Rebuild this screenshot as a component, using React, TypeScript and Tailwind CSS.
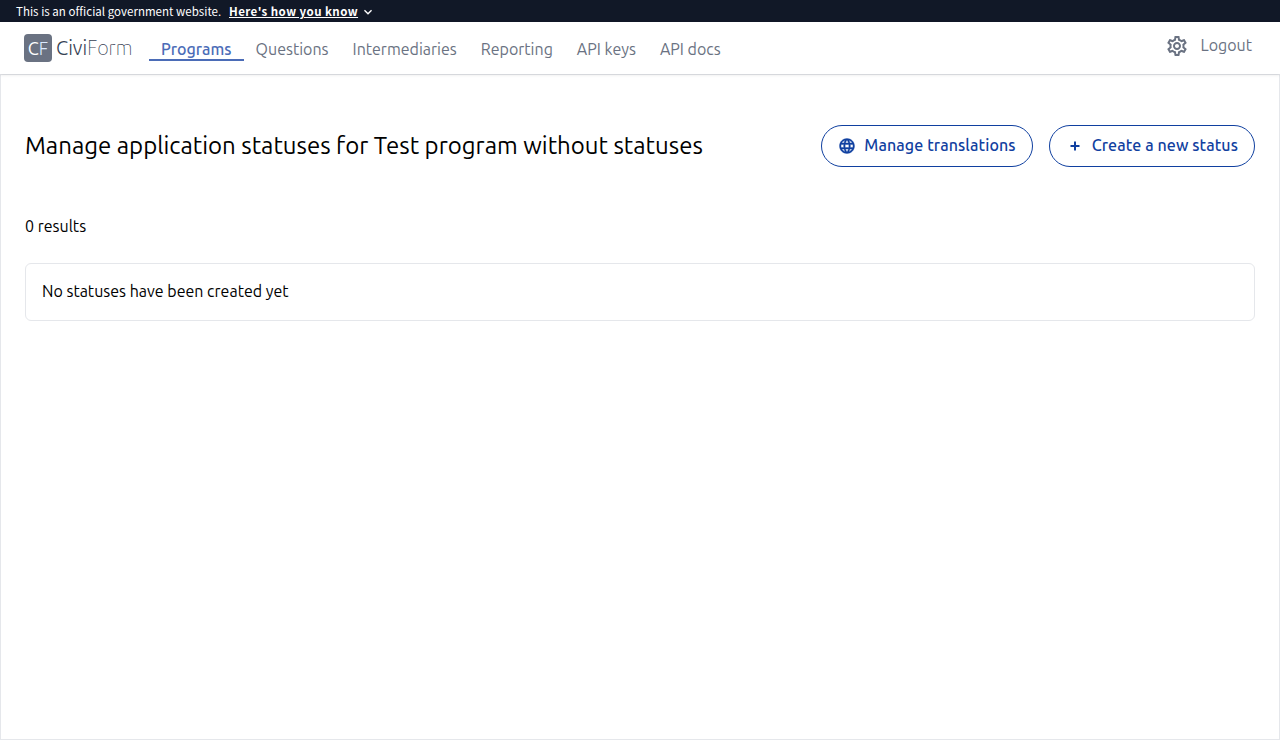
import { ReactNode } from 'react';

const links = ['Programs', 'Questions', 'Intermediaries', 'Reporting', 'API keys', 'API docs'];

function Banner() {
  return (
    <header className="flex h-[22px] items-center bg-[#111827] px-4 font-['Noto_Sans_CJK_JP',sans-serif] text-[11.5px] leading-[22px] text-white">
      <span className="w-[213px] whitespace-nowrap tracking-[0.03px]">This is an official government website.</span>
      <button className="flex items-center leading-[22px] font-bold">
        <span className="whitespace-nowrap tracking-[0.44px] underline">Here's how you know</span>
        <svg className="ml-0.5 mt-0.5 size-4" viewBox="0 0 24 24" fill="currentColor">
          <path d="M16.59 8.59 12 13.17 7.41 8.59 6 10l6 6 6-6z" />
        </svg>
      </button>
    </header>
  );
}

function Nav() {
  return (
    <nav className="relative flex h-[52px] items-start bg-white pl-6 pr-7 text-gray-500 shadow-[0_1px_3px_rgba(0,0,0,0.1)]">
      <a className="mt-3 flex items-center">
        <span className="flex size-7 items-center justify-center rounded bg-gray-500 text-lg font-normal leading-7 text-white">
          C<span className="font-light text-blue-100">F</span>
        </span>
        <span className="ml-1 w-[93px] text-xl font-light leading-7 text-gray-700">
          Civi<span className="font-thin">Form</span>
        </span>
      </a>
      <div className="mt-[15px] flex">
        {links.map((label, i) => (
          <a
            key={label}
            className={
              i === 0
                ? 'h-6 w-[94.6px] border-b-2 border-[#4b6cb7] px-3 font-medium leading-6 text-[#4b6cb7]'
                : 'h-6 px-3 leading-6'
            }
          >
            {label}
          </a>
        ))}
      </div>
      <div className="ml-auto mt-[11px] flex items-start">
        <svg className="mt-[1px] mr-3 size-6" viewBox="0 0 24 24" fill="currentColor">
          <path d="M19.43 12.98c.04-.32.07-.64.07-.98 0-.34-.03-.66-.07-.98l2.11-1.650c.19-.15.24-.42.12-.64l-2-3.460c-.09-.16-.26-.25-.44-.25-.06 0-.12.01-.17.03l-2.49 1c-.52-.4-1.080-.73-1.690-.98l-.38-2.650C14.460 2.180 14.250 2 14 2h-4c-.25 0-.46.18-.49.42l-.38 2.650c-.61.25-1.170.59-1.690.98l-2.490-1c-.06-.02-.12-.03-.18-.03-.17 0-.34.09-.43.25l-2 3.460c-.13.22-.07.49.12.64l2.110 1.650c-.04.32-.07.65-.07.98 0 .33.03.66.07.98l-2.110 1.650c-.19.15-.24.42-.12.64l2 3.460c.09.16.26.25.44.25.06 0 .12-.01.17-.03l2.490-1c.52.4 1.080.73 1.690.98l.38 2.650c.03.24.24.42.49.42h4c.25 0 .46-.18.49-.42l.38-2.650c.61-.25 1.170-.59 1.690-.98l2.490 1c.06.02.12.03.18.03.17 0 .34-.09.43-.25l2-3.460c.12-.22.07-.49-.12-.64l-2.110-1.650zm-1.980-1.710c.04.31.05.52.05.73 0 .21-.02.43-.05.73l-.14 1.130.89.7 1.080.84-.7 1.210-1.270-.51-1.040-.42-.9.68c-.43.32-.84.56-1.250.73l-1.060.43-.16 1.130-.2 1.350h-1.400l-.19-1.350-.16-1.130-1.060-.43c-.43-.18-.83-.41-1.230-.71l-.91-.7-1.060.43-1.270.51-.7-1.210 1.080-.84.89-.7-.14-1.130c-.03-.31-.05-.54-.05-.74s.02-.43.05-.73l.14-1.130-.89-.7-1.080-.84.7-1.210 1.270.51 1.040.42.9-.68c.43-.32.84-.56 1.250-.73l1.060-.43.16-1.130.2-1.350h1.390l.19 1.350.16 1.130 1.060.43c.43.18.83.41 1.230.71l.91.7 1.060-.43 1.270-.51.7 1.210-1.070.85-.89.7.14 1.130zM12 8c-2.210 0-4 1.790-4 4s1.790 4 4 4 4-1.790 4-4-1.790-4-4-4zm0 6c-1.100 0-2-.9-2-2s.9-2 2-2 2 .9 2 2-.9 2-2 2z" />
        </svg>
        <a className="leading-6">Logout</a>
      </div>
    </nav>
  );
}

function PillButton({ icon, children }: { icon: ReactNode; children: ReactNode }) {
  return (
    <button className="flex h-[42px] items-center rounded-full border border-[#1040a0] px-4 font-medium leading-6 tracking-[0.1px] text-[#1040a0]">
      {icon}
      <span className="pb-0.5">{children}</span>
    </button>
  );
}

export default function App() {
  return (
    <div className="flex h-[740px] flex-col bg-white font-['Ubuntu',sans-serif] text-base text-black">
      <Banner />
      <Nav />
      <main className="flex-1 border border-gray-200 px-6">
        <div className="mt-[50px] flex items-center">
          <h1 className="flex-1 text-2xl">Manage application statuses for Test program without statuses</h1>
          <div className="flex gap-4">
            <PillButton
              icon={
                <svg className="mr-2 size-[18px] shrink-0" viewBox="0 0 24 24" fill="currentColor" stroke="currentColor" strokeWidth="0.5">
                  <path d="M11.99 2C6.47 2 2 6.48 2 12s4.47 10 9.99 10C17.52 22 22 17.52 22 12S17.52 2 11.99 2zm6.93 6h-2.95c-.32-1.25-.78-2.45-1.38-3.56 1.84.63 3.37 1.91 4.33 3.56zM12 4.04c.83 1.2 1.48 2.53 1.91 3.96h-3.82c.43-1.43 1.08-2.76 1.91-3.96zM4.26 14C4.1 13.36 4 12.69 4 12s.1-1.36.26-2h3.38c-.08.66-.14 1.32-.14 2 0 .68.06 1.34.14 2H4.26zm.82 2h2.95c.32 1.25.78 2.45 1.38 3.56-1.84-.63-3.37-1.9-4.33-3.56zm2.95-8H5.08c.96-1.66 2.49-2.93 4.33-3.56C8.81 5.55 8.35 6.75 8.03 8zM12 19.96c-.83-1.2-1.48-2.53-1.91-3.96h3.82c-.43 1.43-1.08 2.76-1.91 3.96zM14.34 14H9.66c-.09-.66-.16-1.32-.16-2 0-.68.07-1.35.16-2h4.68c.09.65.16 1.32.16 2 0 .68-.07 1.34-.16 2zm.25 5.56c.6-1.11 1.06-2.31 1.38-3.56h2.95c-.96 1.65-2.49 2.93-4.33 3.56zM16.36 14c.08-.66.14-1.32.14-2 0-.68-.06-1.34-.14-2h3.38c.16.64.26 1.31.26 2s-.1 1.36-.26 2h-3.38z" />
                </svg>
              }
            >
              Manage translations
            </PillButton>
            <PillButton
              icon={
                <svg className="mr-2 size-[18px] shrink-0" viewBox="0 0 18 18" fill="currentColor">
                  <path d="M8 4.500h2V8h3.500v2H10v3.500H8V10H4.500V8H8z" />
                </svg>
              }
            >
              Create a new status
            </PillButton>
          </div>
        </div>
        <p className="mt-[47px] leading-6">0 results</p>
        <div className="mt-[25px] h-[58px] rounded-md border border-gray-200 px-4 pt-[15px] leading-6">
          No statuses have been created yet
        </div>
      </main>
    </div>
  );
}
